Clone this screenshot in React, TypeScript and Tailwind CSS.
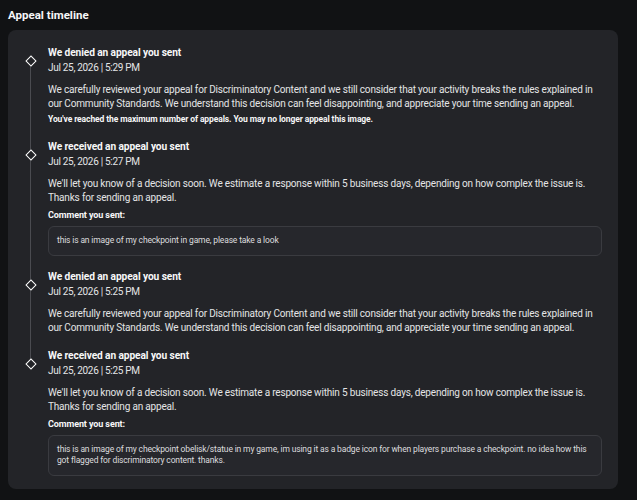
import React from "react";

type Entry = {
  title: string;
  date: string;
  body: string;
  note?: string;
  comment?: string;
};

const DENIED =
  "We carefully reviewed your appeal for Discriminatory Content and we still consider that your activity breaks the rules explained in our Community Standards. We understand this decision can feel disappointing, and appreciate your time sending an appeal.";
const RECEIVED =
  "We'll let you know of a decision soon. We estimate a response within 5 business days, depending on how complex the issue is. Thanks for sending an appeal.";

const entries: Entry[] = [
  {
    title: "We denied an appeal you sent",
    date: "Jul 25, 2026 | 5:29 PM",
    body: DENIED,
    note: "You've reached the maximum number of appeals. You may no longer appeal this image.",
  },
  {
    title: "We received an appeal you sent",
    date: "Jul 25, 2026 | 5:27 PM",
    body: RECEIVED,
    comment: "this is an image of my checkpoint in game, please take a look",
  },
  {
    title: "We denied an appeal you sent",
    date: "Jul 25, 2026 | 5:25 PM",
    body: DENIED,
  },
  {
    title: "We received an appeal you sent",
    date: "Jul 25, 2026 | 5:25 PM",
    body: RECEIVED,
    comment:
      "this is an image of my checkpoint obelisk/statue in my game, im using it as a badge icon for when players purchase a checkpoint. no idea how this got flagged for discriminatory content. thanks.",
  },
];

function TimelineEntry({ e, first, last }: { e: Entry; first: boolean; last: boolean }) {
  return (
    <div className="flex">
      <div className="flex w-[15px] shrink-0 flex-col items-center">
        <div className={`h-[10.5px] w-[1.5px] ${first ? "bg-transparent" : "bg-[#4a4b50]"}`} />
        <div className="relative z-10 h-[8px] w-[8px] shrink-0 rotate-45 border-[1.5px] border-white bg-[#232428]" />
        <div className={`w-[1.5px] flex-1 ${last ? "bg-transparent" : "bg-[#4a4b50]"}`} />
      </div>
      <div className={`ml-[10px] min-w-0 flex-1 ${last ? "pb-[13px]" : "pb-[14.5px]"}`}>
        <div className="text-[10.2px] font-bold leading-[14.5px] tracking-[-0.1px] text-[#f7f7f8]">{e.title}</div>
        <div className="text-[10px] leading-[14.5px] tracking-[-0.3px] text-[#e4e4e6]">{e.date}</div>
        <p className="mt-[7.5px] text-[10px] leading-[14px] tracking-[-0.18px] text-[#e4e4e6]">{e.body}</p>
        {e.note && (
          <p className="mt-[1px] text-[8.5px] font-bold leading-[14px] tracking-[-0.1px] text-[#f7f7f8]">
            {e.note}
          </p>
        )}
        {e.comment && (
          <>
            <div className="mt-[4px] text-[9px] font-bold leading-[12px] tracking-[-0.1px] text-[#f7f7f8]">
              Comment you sent:
            </div>
            <div className="mt-[5px] rounded-[6px] border border-[#3a3b40] bg-[#26272c] px-[8px] py-[8.5px] text-[8.5px] leading-[11px] tracking-[-0.15px] text-[#dcdcdf]">
              {e.comment}
            </div>
          </>
        )}
      </div>
    </div>
  );
}

export default function App() {
  return (
    <div className="min-h-[500px] w-full bg-[#111214] px-[8px] pt-[8px] pb-[10px] font-['Roboto',sans-serif]">
      <div className="text-[11.5px] font-bold leading-[15px] text-[#f7f7f8]">Appeal timeline</div>
      <div className="mt-[7px] w-[610px] rounded-[8px] bg-[#232428] pl-[15px] pr-[16px] pt-[16px]">
        {entries.map((e, i) => (
          <TimelineEntry key={i} e={e} first={i === 0} last={i === entries.length - 1} />
        ))}
      </div>
    </div>
  );
}
